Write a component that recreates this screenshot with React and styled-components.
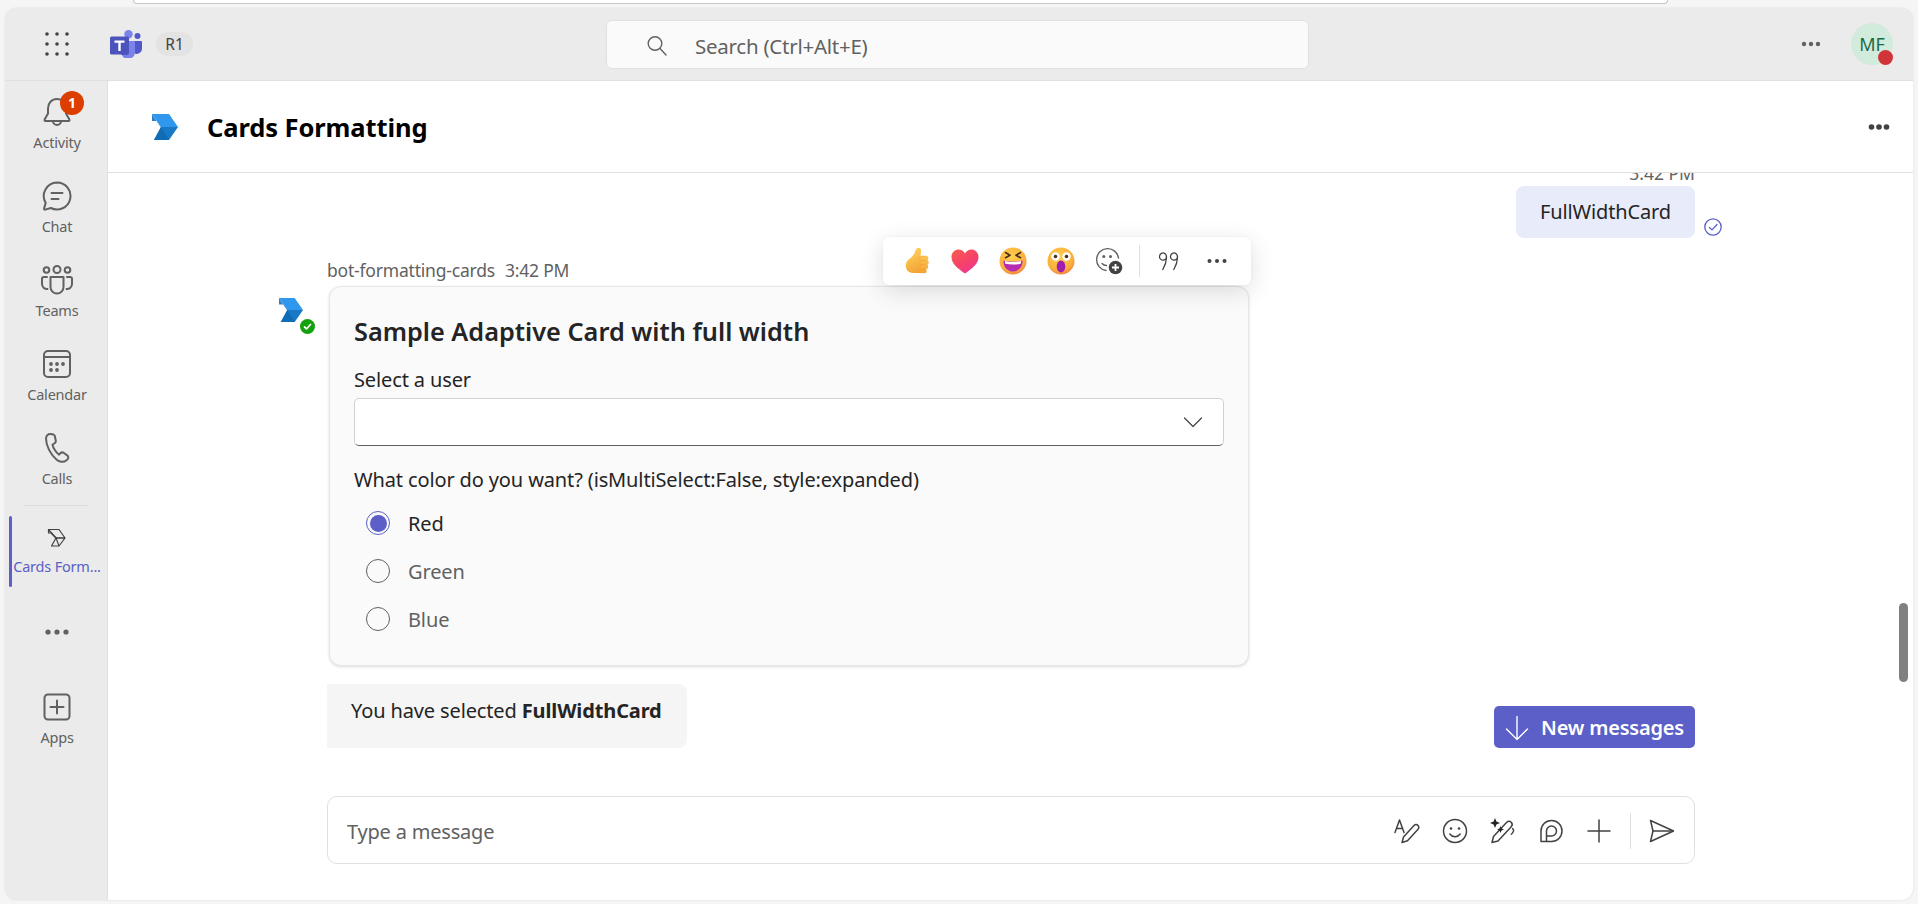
import React from "react";
import styled, { createGlobalStyle } from "styled-components";

const font = `"Noto Sans", "Open Sans", "Liberation Sans", sans-serif`;

const GlobalStyle = createGlobalStyle`
  * { box-sizing: border-box; }
  html, body { margin: 0; height: 100%; background: #f5f5f5; }
  body { font-family: ${font}; overflow: hidden; }
`;

const Page = styled.div`
  width: 1918px;
  height: 904px;
  display: flex;
  flex-direction: column;
  padding: 0 5px 4px 5px;
`;

const BrowserEdge = styled.div`
  height: 8px;
  flex: none;
  margin: 0 245px 0 128px;
  &::before {
    content: "";
    display: block;
    height: 3px;
    border: 1px solid #c6c6c6;
    border-top: 0;
    border-radius: 0 0 10px 10px;
    background: #fff;
  }
`;

const Window = styled.div`
  flex: 1;
  display: flex;
  flex-direction: column;
  min-height: 0;
  border-radius: 12px;
  overflow: hidden;
  background: #ebebeb;
  box-shadow: 0 0 2px rgba(0, 0, 0, 0.12);
`;

const TitleBar = styled.header`
  height: 73px;
  flex: none;
  display: grid;
  grid-template-columns: 601px 703px 1fr;
  align-items: center;
  background: #ebebeb;
  border-bottom: 1px solid #e0e0e0;
`;

const TitleLeft = styled.div`
  display: flex;
  align-items: center;
  height: 100%;
`;

const Waffle = styled.div`
  width: 105px;
  padding-right: 2px;
  display: flex;
  justify-content: center;
  flex: none;
`;

const RingPill = styled.span`
  margin-left: 14px;
  height: 24px;
  width: 37px;
  border-radius: 12px;
  background: #e3e3e3;
  color: #424242;
  font-size: 15.5px;
  line-height: 24px;
  text-align: center;
`;

const SearchBox = styled.div`
  height: 49px;
  display: flex;
  align-items: center;
  gap: 27px;
  padding: 3px 0 0 39px;
  background: #fafafa;
  border: 1px solid #e0e0e0;
  border-radius: 6px;
  color: #616161;
  font-size: 20.5px;
  letter-spacing: -0.25px;
`;

const TitleRight = styled.div`
  display: flex;
  align-items: center;
  justify-content: flex-end;
  gap: 28px;
  padding-right: 20px;
`;

const Avatar = styled.div`
  position: relative;
  width: 42px;
  height: 42px;
  border-radius: 50%;
  background: #d1ebdd;
  color: #1d6b43;
  font-size: 18px;
  line-height: 42px;
  text-align: center;
`;

const PresenceDot = styled.span`
  position: absolute;
  right: 0;
  bottom: 0;
  width: 15px;
  height: 15px;
  border-radius: 50%;
  background: #d13438;
`;

const Body = styled.div`
  flex: 1;
  display: flex;
  min-height: 0;
`;

const Rail = styled.nav`
  width: 103px;
  flex: none;
  display: flex;
  flex-direction: column;
  padding: 1px 0 0 2px;
  background: #ebebeb;
  border-right: 1px solid #e0e0e0;
`;

const RailItem = styled.div`
  position: relative;
  height: ${(p) => p.$h || 84}px;
  margin-top: ${(p) => p.$mt || 0}px;
  padding-bottom: ${(p) => (p.$active ? 5 : 0)}px;
  display: flex;
  flex-direction: column;
  align-items: center;
  justify-content: center;
  gap: ${(p) => (p.$active ? 3 : 5)}px;
  color: ${(p) => (p.$active ? "#5b5fc7" : "#616161")};
  font-size: 14.5px;
  letter-spacing: -0.2px;
  line-height: 20px;
  white-space: nowrap;

  ${(p) =>
    p.$active &&
    `&::before {
      content: "";
      position: absolute;
      left: 2px;
      top: 0;
      bottom: 0;
      width: 3px;
      border-radius: 2px;
      background: #5b5fc7;
    }`}
`;

const RailDivider = styled.div`
  height: 1px;
  margin: 3px 19px 0 17px;
  background: #dedede;
`;

const IconSlot = styled.span`
  position: relative;
  display: flex;
  align-items: center;
  justify-content: center;
  height: 30px;
`;

const Badge = styled.span`
  position: absolute;
  top: -6px;
  right: -12px;
  width: 24px;
  height: 24px;
  border-radius: 50%;
  background: #dc3e00;
  color: #fff;
  font-size: 14px;
  font-weight: 700;
  line-height: 24px;
  text-align: center;
`;

const Main = styled.main`
  position: relative;
  flex: 1;
  min-width: 0;
  display: flex;
  flex-direction: column;
  background: #fff;
`;

const ChatHeader = styled.div`
  height: 92px;
  flex: none;
  display: flex;
  align-items: center;
  padding: 0 22px 0 44px;
  border-bottom: 1px solid #e0e0e0;
`;

const ChatTitle = styled.h1`
  flex: 1;
  margin: 0 0 0 29px;
  color: #000;
  font-size: 25.5px;
  font-weight: 700;
  letter-spacing: -0.1px;
`;

const Feed = styled.div`
  flex: 1;
  min-height: 0;
  overflow: hidden;
  display: grid;
  grid-template-columns: 48px 1368px;
  grid-auto-rows: min-content;
  padding-left: 171px;
`;

const Line = styled.div`
  grid-column: 2;
  min-width: 0;
`;

const SentTime = styled(Line)`
  height: 13px;
  display: flex;
  align-items: flex-end;
  justify-content: flex-end;
  padding-bottom: 4px;
  color: #616161;
  font-size: 17.5px;
  line-height: 18px;
`;

const SentRow = styled(Line)`
  display: flex;
  justify-content: flex-end;
  align-items: flex-end;
`;

const SentBubble = styled.div`
  width: 179px;
  height: 52px;
  background: #e8ebfa;
  border-radius: 8px;
  color: #242424;
  font-size: 20px;
  letter-spacing: -0.13px;
  line-height: 52px;
  text-align: center;
`;

const ReadMark = styled.span`
  display: flex;
  margin: 0 -27px 2px 9px;
  width: 18px;
  height: 18px;
`;

const SenderLine = styled(Line)`
  margin-top: 22px;
  height: 19px;
  color: #616161;
  font-size: 17.5px;
  letter-spacing: -0.2px;
  line-height: 20px;
  display: flex;
  gap: 10px;
`;

const BotAvatar = styled.div`
  grid-column: 1;
  position: relative;
  width: 36px;
  height: 36px;
  margin-top: 19px;
`;

const BotPresence = styled.span`
  position: absolute;
  left: 21px;
  top: 21px;
  width: 15px;
  height: 15px;
  border-radius: 50%;
  background: #13a10e;
  display: flex;
  align-items: center;
  justify-content: center;
`;

const CardWrap = styled(Line)`
  position: relative;
  margin-top: 7px;
  padding-left: 2px;
`;

const Card = styled.div`
  width: 920px;
  height: 380px;
  padding: 28px 24px 0;
  background: #fafafa;
  border: 1px solid #e6e6e6;
  border-radius: 12px;
  box-shadow: 0 1px 3px rgba(0, 0, 0, 0.14);
  color: #242424;
`;

const CardTitle = styled.div`
  font-size: 25.3px;
  font-weight: 600;
  line-height: 32px;
`;

const FieldLabel = styled.div`
  margin-top: ${(p) => p.$mt}px;
  font-size: 20px;
  letter-spacing: -0.13px;
  line-height: 26px;
`;

const Select = styled.div`
  height: 48px;
  margin-top: 5px;
  display: flex;
  align-items: center;
  justify-content: flex-end;
  padding-right: 20px;
  background: #fff;
  border: 1px solid #d1d1d1;
  border-bottom-color: #616161;
  border-radius: 5px;
`;

const RadioList = styled.div`
  margin-top: 6px;
`;

const RadioRow = styled.div`
  height: 48px;
  display: flex;
  align-items: center;
  gap: 18px;
  padding-left: 12px;
  color: ${(p) => (p.$on ? "#242424" : "#616161")};
  font-size: 20px;
  letter-spacing: -0.13px;
`;

const RadioMark = styled.span`
  width: 24px;
  height: 24px;
  flex: none;
  border-radius: 50%;
  border: 1px solid ${(p) => (p.$on ? "#5b5fc7" : "#616161")};
  display: flex;
  align-items: center;
  justify-content: center;
  &::after {
    content: "";
    width: 17px;
    height: 17px;
    border-radius: 50%;
    background: ${(p) => (p.$on ? "#5b5fc7" : "transparent")};
  }
`;

const ReactionBar = styled.div`
  position: absolute;
  top: -49px;
  left: 556px;
  width: 368px;
  height: 48px;
  display: flex;
  align-items: center;
  padding-left: 10px;
  background: #fff;
  border-radius: 6px;
  box-shadow: 0 6px 24px rgba(0, 0, 0, 0.13), 0 0 3px rgba(0, 0, 0, 0.05);
`;

const ReactionSlot = styled.span`
  width: 48px;
  height: 48px;
  display: flex;
  align-items: center;
  justify-content: center;
`;

const BarDivider = styled.span`
  width: 1px;
  height: 32px;
  margin: 0 5px 0 6px;
  background: #e0e0e0;
`;

const ReplyBubble = styled(Line)`
  width: 360px;
  height: 64px;
  margin-top: 18px;
  padding: 14px 24px;
  background: #f5f5f5;
  border-radius: 0 8px 8px 0;
  color: #242424;
  font-size: 20px;
  letter-spacing: -0.13px;
  line-height: 26px;
  white-space: nowrap;

  b {
    font-weight: 700;
  }
`;

const NewMessages = styled.div`
  position: absolute;
  left: 1386px;
  top: 625px;
  width: 201px;
  height: 42px;
  display: flex;
  align-items: center;
  gap: 12px;
  padding: 1px 0 0 11px;
  background: #5b5fc7;
  border-radius: 5px;
  color: #fff;
  font-size: 20px;
  font-weight: 600;
  letter-spacing: -0.2px;
  white-space: nowrap;
`;

const Composer = styled(Line)`
  height: 68px;
  margin-top: 48px;
  display: flex;
  align-items: center;
  padding: 2px 0 0 19px;
  background: #fff;
  border: 1px solid #e0e0e0;
  border-radius: 10px;
  color: #616161;
  font-size: 20px;
  letter-spacing: -0.2px;
`;

const ComposerHint = styled.span`
  flex: 1;
`;

const ComposerTool = styled.span`
  width: 48px;
  display: flex;
  justify-content: center;
`;

const ComposerDivider = styled.span`
  width: 1px;
  height: 36px;
  margin: 0 7px 0 7px;
  background: #e0e0e0;
`;

const ToolTail = styled.span`
  width: 8px;
`;

const ScrollThumb = styled.div`
  position: absolute;
  right: 5px;
  top: 522px;
  width: 9px;
  height: 79px;
  border-radius: 5px;
  background: #808080;
`;

const stroke = { fill: "none", stroke: "#616161", strokeWidth: 2, strokeLinecap: "round", strokeLinejoin: "round" };
const thin = { fill: "none", stroke: "#424242", strokeWidth: 1.5, strokeLinecap: "round", strokeLinejoin: "round" };

const Dots = ({ color = "#616161", r = 2.2, gap = 7, size = 24 }) => (
  <svg width={size} height={10} viewBox={`0 0 ${size} 10`}>
    {[-gap, 0, gap].map((d) => (
      <circle key={d} cx={size / 2 + d} cy={5} r={r} fill={color} />
    ))}
  </svg>
);

const WaffleIcon = () => (
  <svg width="24" height="24" viewBox="0 0 24 24" fill="#424242">
    {[2, 12, 22].map((y) => [2, 12, 22].map((x) => <circle key={`${x}${y}`} cx={x} cy={y} r="1.8" />))}
  </svg>
);

const TeamsLogo = () => (
  <svg width="32" height="28" viewBox="0 0 32 28">
    <circle cx="27.5" cy="6" r="3" fill="#5059c9" />
    <path d="M22 11h9a1 1 0 0 1 1 1v7a5.5 5.5 0 0 1-10 2.5z" fill="#5059c9" />
    <circle cx="18.5" cy="4.2" r="4.2" fill="#7b83eb" />
    <path d="M12 11h13v11a7 7 0 0 1-13 3.5z" fill="#7b83eb" />
    <path d="M11 12h7v12a1 1 0 0 1-1 1h-6z" fill="#3f45a8" opacity="0.55" />
    <rect x="0" y="6.5" width="19" height="18" rx="1.5" fill="#4b53bc" />
    <path d="M4.5 10.5h10v2.2h-3.8v8.2H8.3v-8.2H4.5z" fill="#fff" />
  </svg>
);

const ChevronLogo = ({ size = 26 }) => (
  <svg width={size} height={size} viewBox="0 0 26 26">
    <path d="M0 0h17l9 13H9z" fill="#2f98ee" />
    <path d="M0 0l8.5 13H9L5 7H0z" fill="#1672bd" opacity="0.9" />
    <path d="M9 13h17l-9 13H2z" fill="#1879c7" />
    <path d="M9 13L2 26h15z" fill="#0f6cb5" />
  </svg>
);

const SearchIcon = () => (
  <svg width="22" height="22" viewBox="0 0 22 22" {...stroke} strokeWidth="1.4">
    <circle cx="9" cy="8.5" r="6.8" />
    <path d="M14 13.5l6 6.5" />
  </svg>
);

const BellIcon = () => (
  <svg width="30" height="32" viewBox="0 0 30 32" {...stroke}>
    <path d="M15 3c-5.4 0-9 4.2-9 9.4v5.2L2.6 23.6c-.3.6 0 1.4.8 1.4h23.2c.8 0 1.1-.8.8-1.4L24 17.6v-5.2C24 7.2 20.4 3 15 3z" />
    <path d="M11 25a4 4 0 0 0 8 0" />
  </svg>
);

const ChatIcon = () => (
  <svg width="32" height="32" viewBox="0 0 32 32" {...stroke}>
    <path d="M16 2.5a13.5 13.5 0 1 1-6.2 25.5l-5.5 1.6c-.8.2-1.4-.4-1.2-1.2l1.6-5.5A13.5 13.5 0 0 1 16 2.5z" />
    <path d="M10.5 13h11M10.5 19h7" />
  </svg>
);

const TeamsIcon = () => (
  <svg width="32" height="30" viewBox="0 0 32 30" {...stroke}>
    <circle cx="16" cy="4.5" r="3.5" />
    <circle cx="5.5" cy="5" r="2.8" />
    <circle cx="26.5" cy="5" r="2.8" />
    <path d="M9.5 12h13v10a6.5 6.5 0 0 1-13 0z" />
    <path d="M6 12H3a2 2 0 0 0-2 2v5a5 5 0 0 0 5.5 5M26 12h3a2 2 0 0 1 2 2v5a5 5 0 0 1-5.5 5" />
  </svg>
);

const CalendarIcon = () => (
  <svg width="30" height="30" viewBox="0 0 30 30">
    <rect x="2" y="2" width="26" height="26" rx="4" fill="none" stroke="#616161" strokeWidth="2" />
    <path d="M2 8h26" stroke="#616161" strokeWidth="2" />
    {[[15, 15], [21, 15], [9, 15], [9, 21], [15, 21]].map(([x, y]) => (
      <circle key={`${x}-${y}`} cx={x} cy={y} r="1.9" fill="#616161" />
    ))}
  </svg>
);

const PhoneIcon = () => (
  <svg width="26" height="32" viewBox="0 0 26 32" {...stroke}>
    <path d="M9.5 2.6L6.7 2C4.4 1.6 2 3.6 2 6.5c0 7 4.5 16.3 11 21.5 2.6 2.1 6.8 2.6 9.2.6l1.2-1.2c1.3-1.3 1.2-3-.2-4l-3.3-2.4c-1.2-.9-2.6-.7-3.5.2l-1.400 1.400c-3-1.900-6-6.800-6.500-10.100l1.800-1c1.200-.7 1.700-2 1.400-3.300L10.800 4c-.2-.7-.7-1.200-1.300-1.400z" />
  </svg>
);

const CardsRailIcon = () => (
  <svg width="20" height="20" viewBox="0 0 20 20" fill="none" stroke="#424242" strokeWidth="1.2" strokeLinejoin="round">
    <path d="M1.500 1.500h10.500l6 8.500-6 8H4.500l4.500-8z" />
    <path d="M1.500 1.500v3.500h2.500L9 10" />
    <path d="M9 10h9" stroke="#111" />
    <path d="M9 10l3 8" />
  </svg>
);

const AppsIcon = () => (
  <svg width="28" height="28" viewBox="0 0 28 28" {...stroke}>
    <rect x="1.500" y="1.500" width="25" height="25" rx="3.500" />
    <path d="M14 7.500v13M7.500 14h13" />
  </svg>
);

const ReadCheck = () => (
  <svg width="18" height="18" viewBox="0 0 18 18" fill="none" stroke="#5b5fc7" strokeWidth="1.300" strokeLinecap="round" strokeLinejoin="round">
    <circle cx="9" cy="9" r="8.200" />
    <path d="M5.500 9.500l2.500 2.400 5-5.400" />
  </svg>
);

const TickMini = () => (
  <svg width="9" height="9" viewBox="0 0 9 9" fill="none" stroke="#fff" strokeWidth="1.700" strokeLinecap="round" strokeLinejoin="round">
    <path d="M1.500 5l2 1.800L7.500 2.500" />
  </svg>
);

const ChevronDown = () => (
  <svg width="20" height="12" viewBox="0 0 20 12" fill="none" stroke="#424242" strokeWidth="1.200" strokeLinecap="round" strokeLinejoin="round">
    <path d="M1.500 2l8.500 8.500L18.500 2" />
  </svg>
);

const ThumbEmoji = () => (
  <svg width="24" height="28" viewBox="0 0 24 28">
    <defs>
      <linearGradient id="thumb" x1="0.300" y1="0" x2="0.700" y2="1">
        <stop offset="0" stopColor="#ffd45a" />
        <stop offset="1" stopColor="#f3a033" />
      </linearGradient>
    </defs>
    <path d="M13.500.8c1.800 0 2.600 1.500 2.500 3.200L15.500 9.500h4V26H8.500C3.500 26 .8 23 .8 18.500c0-3 1.500-5 3.500-6.500 3-2 5.200-5 6.200-8.500C10.900 2 12.200.8 13.500.8z" fill="url(#thumb)" />
    <rect x="14.500" y="9" width="8.500" height="4.500" rx="2.200" fill="#fbc04c" stroke="#ee9f3a" strokeWidth="0.400" />
    <rect x="15" y="13.300" width="8.500" height="4.500" rx="2.200" fill="#f9b744" stroke="#ee9f3a" strokeWidth="0.400" />
    <rect x="15" y="17.600" width="8" height="4.500" rx="2.200" fill="#f8b03e" stroke="#ee9f3a" strokeWidth="0.400" />
    <rect x="14.500" y="21.800" width="7" height="4.300" rx="2.100" fill="#f5a637" stroke="#ee9f3a" strokeWidth="0.400" />
  </svg>
);

const HeartEmoji = () => (
  <svg width="28" height="25" viewBox="0 0 28 25">
    <defs>
      <linearGradient id="heart" x1="0.100" y1="0" x2="0.800" y2="1">
        <stop offset="0" stopColor="#f85a50" />
        <stop offset="0.600" stopColor="#f53f6c" />
        <stop offset="1" stopColor="#e63a9b" />
      </linearGradient>
    </defs>
    <path d="M14 24.500C7 19.500 0.500 15 0.500 8 0.500 3.500 4 .5 7.500.5c2.800 0 5 1.500 6.500 4 1.500-2.500 3.700-4 6.500-4 3.500 0 7 3 7 7.500 0 7-6.500 11.500-13.500 16.500z" fill="url(#heart)" />
  </svg>
);

const FaceDefs = ({ id }) => (
  <defs>
    <radialGradient id={id} cx="0.450" cy="0.350" r="0.750">
      <stop offset="0" stopColor="#ffd050" />
      <stop offset="0.650" stopColor="#fbb03b" />
      <stop offset="1" stopColor="#f0703f" />
    </radialGradient>
  </defs>
);

const LaughEmoji = () => (
  <svg width="28" height="28" viewBox="0 0 28 28">
    <FaceDefs id="laughFace" />
    <circle cx="14" cy="14" r="13.500" fill="url(#laughFace)" />
    <path d="M6.500 5.500l4.500 2.800-4.500 2.400M21.500 5.500L17 8.300l4.500 2.400" fill="none" stroke="#4a3020" strokeWidth="1.600" strokeLinecap="round" strokeLinejoin="round" />
    <path d="M4.500 13.500c5 1.500 14 1.500 19 0 .6 6-4 11-9.500 11s-10-5-9.500-11z" fill="#b62bb0" />
    <path d="M6 14c5 1.300 11 1.300 16 0 .2 1.200 0 2-.4 2.800-4.500 1-10.700 1-15.200 0-.4-.8-.6-1.600-.4-2.800z" fill="#fff" />
  </svg>
);

const WowEmoji = () => (
  <svg width="28" height="28" viewBox="0 0 28 28">
    <FaceDefs id="wowFace" />
    <circle cx="14" cy="14" r="13.500" fill="url(#wowFace)" />
    <circle cx="8.500" cy="9.500" r="4.200" fill="#fff" />
    <circle cx="19.500" cy="9.500" r="4.200" fill="#fff" />
    <circle cx="8.500" cy="9.500" r="1.800" fill="#4a3020" />
    <circle cx="19.500" cy="9.500" r="1.800" fill="#4a3020" />
    <ellipse cx="14" cy="19.500" rx="4.300" ry="6" fill="#a01eb0" />
  </svg>
);

const AddReaction = () => (
  <svg width="28" height="28" viewBox="0 0 28 28">
    <path d="M11 23.500A11 11 0 1 1 23.500 11" fill="none" stroke="#616161" strokeWidth="1.400" strokeLinecap="round" />
    <circle cx="8.800" cy="9.500" r="1.500" fill="#616161" />
    <circle cx="15.500" cy="9.500" r="1.500" fill="#616161" />
    <path d="M7 16.500c1.200 1.300 2.800 2 4.500 2" fill="none" stroke="#616161" strokeWidth="1.400" strokeLinecap="round" />
    <circle cx="20.500" cy="20.500" r="6.800" fill="#424242" />
    <path d="M20.500 17v7M17 20.500h7" stroke="#fff" strokeWidth="1.800" />
  </svg>
);

const QuoteIcon = () => (
  <svg width="20" height="20" viewBox="0 0 20 20" fill="none" stroke="#424242" strokeWidth="1.300" strokeLinecap="round">
    <path d="M7.500 5.500a3.500 3.500 0 1 1-6.800-1c.5-1.900 2.800-3 4.400-2.300 1.800.8 2.500 2 2.400 4.500-.1 4-1.500 8-3.700 11.800" />
    <path d="M18.500 5.500a3.500 3.500 0 1 1-6.800-1c.5-1.900 2.800-3 4.400-2.300 1.800.8 2.500 2 2.400 4.500-.1 4-1.500 8-3.700 11.800" />
  </svg>
);

const ArrowDown = () => (
  <svg width="24" height="26" viewBox="0 0 24 26" fill="none" stroke="#fff" strokeWidth="1.400" strokeLinecap="round" strokeLinejoin="round">
    <path d="M12 1.500v23M1.500 14L12 24.500 22.500 14" />
  </svg>
);

const FormatIcon = () => (
  <svg width="26" height="26" viewBox="0 0 26 26" {...thin}>
    <path d="M1 14.500L5.500 2l4.500 12.500M2.500 10.500h6" />
    <path d="M8 24.500l1.500-5.500L20 7.500c1.200-1.200 3-1.200 4 0s1 2.800-.2 4L13.500 22.800z" />
  </svg>
);

const SmileIcon = () => (
  <svg width="26" height="26" viewBox="0 0 26 26" {...thin}>
    <circle cx="13" cy="13" r="11.500" />
    <circle cx="9" cy="10.500" r="1.300" fill="#424242" stroke="none" />
    <circle cx="17" cy="10.500" r="1.300" fill="#424242" stroke="none" />
    <path d="M7.800 16c1.300 1.800 3.200 2.700 5.200 2.700s3.900-.9 5.200-2.700" />
  </svg>
);

const CopilotPen = () => (
  <svg width="26" height="26" viewBox="0 0 26 26">
    <path d="M2 24.500l1.500-6L16.500 4.500c1.500-1.400 3.500-1.400 4.700-.2s1.200 3.200-.2 4.700L8 23z" fill="none" stroke="#424242" strokeWidth="1.500" strokeLinejoin="round" />
    <path d="M22.500 10.500c1.500 1.200 1.500 2.500.3 4l-1.500 1.800" fill="none" stroke="#424242" strokeWidth="1.300" strokeLinecap="round" />
    <path d="M5 0l1.400 3.600L10 5 6.400 6.400 5 10 3.600 6.400 0 5l3.600-1.400z" fill="#242424" />
    <path d="M10.500 8l1 2.500 2.500 1-2.500 1-1 2.500-1-2.500-2.500-1 2.500-1z" fill="#242424" />
  </svg>
);

const LoopIcon = () => (
  <svg width="24" height="24" viewBox="0 0 24 24" {...thin}>
    <path d="M2 22.500V12A10.500 10.500 0 1 1 12.500 22.500z" />
    <path d="M7.500 22V12a5 5 0 1 1 5 5H7.500" />
  </svg>
);

const PlusIcon = () => (
  <svg width="24" height="24" viewBox="0 0 24 24" {...thin}>
    <path d="M12 1v22M1 12h22" />
  </svg>
);

const SendIcon = () => (
  <svg width="26" height="24" viewBox="0 0 26 24" {...thin}>
    <path d="M1.500 1.500L24.500 12 1.500 22.500 4 12z" />
    <path d="M4 12h20" />
  </svg>
);

const railTop = [
  { label: "Activity", icon: <BellIcon />, badge: "1" },
  { label: "Chat", icon: <ChatIcon /> },
  { label: "Teams", icon: <TeamsIcon /> },
  { label: "Calendar", icon: <CalendarIcon /> },
  { label: "Calls", icon: <PhoneIcon /> },
];

const reactions = [<ThumbEmoji />, <HeartEmoji />, <LaughEmoji />, <WowEmoji />, <AddReaction />];
const tools = [<FormatIcon />, <SmileIcon />, <CopilotPen />, <LoopIcon />, <PlusIcon />];
const colorChoices = ["Red", "Green", "Blue"];

const App = () => {
  return (
    <Page>
      <GlobalStyle />
      <BrowserEdge />
      <Window>
        <TitleBar>
          <TitleLeft>
            <Waffle>
              <WaffleIcon />
            </Waffle>
            <TeamsLogo />
            <RingPill>R1</RingPill>
          </TitleLeft>
          <SearchBox>
            <SearchIcon />
            Search (Ctrl+Alt+E)
          </SearchBox>
          <TitleRight>
            <Dots />
            <Avatar>
              MF
              <PresenceDot />
            </Avatar>
          </TitleRight>
        </TitleBar>

        <Body>
          <Rail>
            {railTop.map((item) => (
              <RailItem key={item.label}>
                <IconSlot>
                  {item.icon}
                  {item.badge && <Badge>{item.badge}</Badge>}
                </IconSlot>
                {item.label}
              </RailItem>
            ))}
            <RailDivider />
            <RailItem $active $h={71} $mt={10}>
              <IconSlot>
                <CardsRailIcon />
              </IconSlot>
              Cards Form...
            </RailItem>
            <RailItem $h={90}>
              <Dots r={2.6} gap={9} size={30} />
            </RailItem>
            <RailItem>
              <IconSlot>
                <AppsIcon />
              </IconSlot>
              Apps
            </RailItem>
          </Rail>

          <Main>
            <ChatHeader>
              <ChevronLogo />
              <ChatTitle>Cards Formatting</ChatTitle>
              <Dots color="#424242" r={2.8} gap={7.5} size={24} />
            </ChatHeader>

            <Feed>
              <SentTime>3:42 PM</SentTime>
              <SentRow>
                <SentBubble>FullWidthCard</SentBubble>
                <ReadMark>
                  <ReadCheck />
                </ReadMark>
              </SentRow>

              <SenderLine>
                <span>bot-formatting-cards</span>
                <span>3:42 PM</span>
              </SenderLine>

              <BotAvatar>
                <ChevronLogo size={24} />
                <BotPresence>
                  <TickMini />
                </BotPresence>
              </BotAvatar>
              <CardWrap>
                <ReactionBar>
                  {reactions.map((r, i) => (
                    <ReactionSlot key={i}>{r}</ReactionSlot>
                  ))}
                  <BarDivider />
                  <ReactionSlot>
                    <QuoteIcon />
                  </ReactionSlot>
                  <ReactionSlot>
                    <Dots color="#424242" r={2} gap={7.5} />
                  </ReactionSlot>
                </ReactionBar>
                <Card>
                  <CardTitle>Sample Adaptive Card with full width</CardTitle>
                  <FieldLabel $mt={20}>Select a user</FieldLabel>
                  <Select>
                    <ChevronDown />
                  </Select>
                  <FieldLabel $mt={21}>What color do you want? (isMultiSelect:False, style:expanded)</FieldLabel>
                  <RadioList>
                    {colorChoices.map((c, i) => (
                      <RadioRow key={c} $on={i === 0}>
                        <RadioMark $on={i === 0} />
                        {c}
                      </RadioRow>
                    ))}
                  </RadioList>
                </Card>
              </CardWrap>

              <ReplyBubble>
                You have selected <b>FullWidthCard</b>
              </ReplyBubble>

              <Composer>
                <ComposerHint>Type a message</ComposerHint>
                {tools.map((t, i) => (
                  <ComposerTool key={i}>{t}</ComposerTool>
                ))}
                <ComposerDivider />
                <ComposerTool>
                  <SendIcon />
                </ComposerTool>
                <ToolTail />
              </Composer>
            </Feed>

            <NewMessages>
              <ArrowDown />
              New messages
            </NewMessages>
            <ScrollThumb />
          </Main>
        </Body>
      </Window>
    </Page>
  );
};

export default App;
